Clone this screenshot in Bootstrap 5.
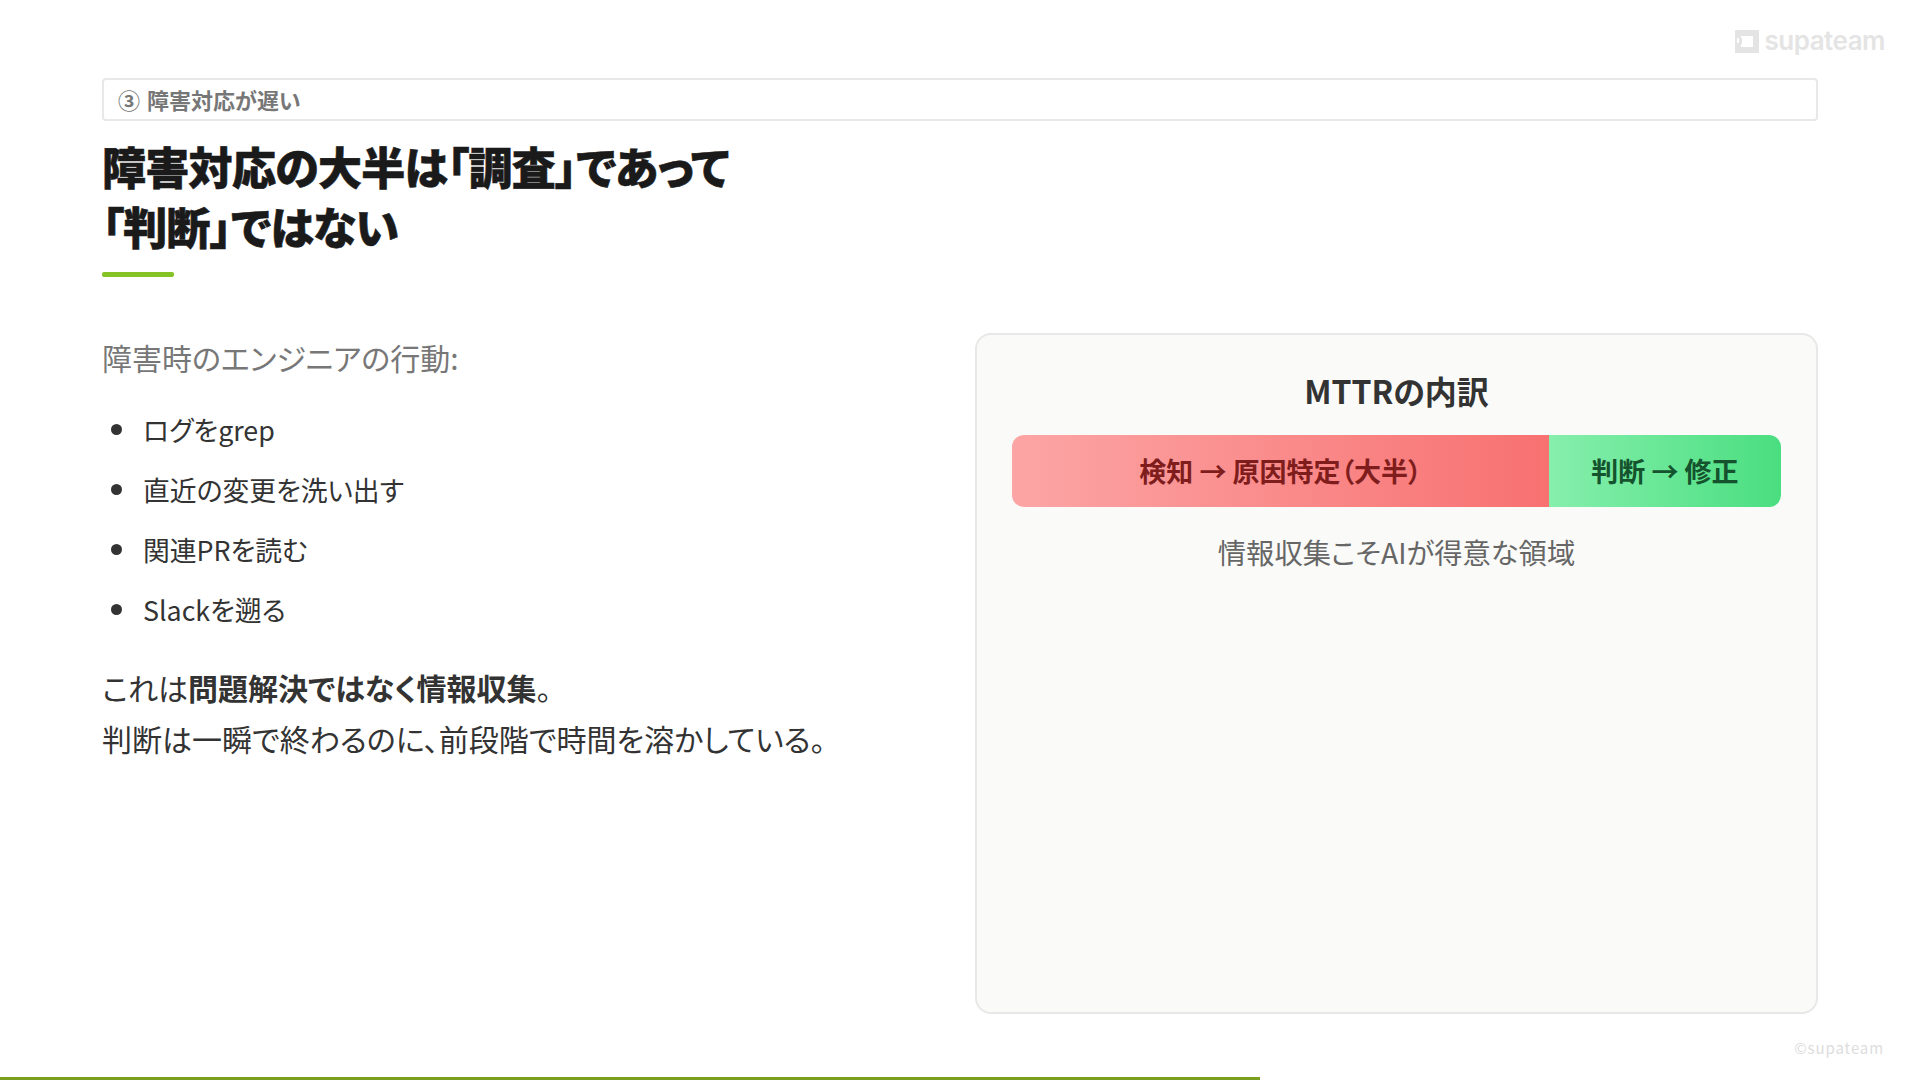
<!DOCTYPE html>
<html lang="ja">
<head>
<meta charset="utf-8">
<title>MTTR</title>
<link href="https://cdn.jsdelivr.net/npm/bootstrap@5.3.0/dist/css/bootstrap.min.css" rel="stylesheet">
<style>
html,body{height:100%;margin:0;}
body{width:1920px;height:1080px;overflow:hidden;background:#fff;position:relative;font-family:"Noto Sans CJK JP","Noto Sans",sans-serif;font-feature-settings:"palt";color:#333;}
.slide{padding:78px 102px 66px;height:1080px;}
.tagbar{height:43px;border:2px solid #e8e8e8;border-radius:4px;padding:0 14px;font-size:22px;font-weight:700;color:#777;line-height:38px;}
.tagbar span{margin-right:7px;}
.headline{font-size:44px;font-weight:900;line-height:60px;color:#1a1a1a;margin:15px 0 0;letter-spacing:-.7px;-webkit-text-stroke:.6px #1a1a1a;}
.rule{width:72px;height:5px;background:#84c225;border-radius:2px;margin-top:16px;}
.body-row{margin-top:56px;gap:0;flex:1;}
.leftcol{width:873px;}
.lead-line{font-size:30px;line-height:48px;color:#777;margin:0 0 29px;}
.items{list-style:none;margin:0;padding:0;}
.items li{font-size:26.8px;line-height:40px;margin-bottom:20px;padding-left:41px;position:relative;color:#333;}
.items li::before{content:"";position:absolute;left:9px;top:14px;width:11px;height:11px;border-radius:50%;background:#333;}
.conclude{font-size:30px;line-height:51px;color:#333;margin:32px 0 0;}
.conclude strong{font-weight:700;}
.panel{flex:1;background:#fafaf8;border:2px solid #e8e8e8;border-radius:16px;padding:32px 35px;}
.panel-title{font-size:32px;font-weight:700;line-height:46px;color:#333;text-align:center;margin:0 0 22px;}
.bar{height:72px;border-radius:12px;overflow:hidden;font-size:27px;font-weight:700;}
.seg-a{width:537px;background:linear-gradient(90deg,#fca5a5,#f87171);color:#7f1d1d;}
.seg-b{flex:1;background:linear-gradient(90deg,#86efac,#4ade80);color:#14532d;}
.panel-note{font-size:28.3px;line-height:44px;color:#666;text-align:center;margin:23px 0 0;}
.brand{position:absolute;top:24px;right:35px;gap:5px;color:#e4e4e4;font-family:"Inter","Liberation Sans",sans-serif;font-weight:600;font-size:26px;line-height:34px;letter-spacing:-.5px;}
.copy{position:absolute;right:36px;top:1037px;font-size:15px;line-height:22px;color:#ddd;letter-spacing:.9px;}
.progress-line{position:absolute;left:0;bottom:0;width:1260px;height:3px;background:#7a9e1f;}
</style>
</head>
<body>
<div class="slide d-flex flex-column">
  <div class="tagbar"><span>③</span>障害対応が遅い</div>
  <h1 class="headline">障害対応の大半は「調査」であって<br>「判断」ではない</h1>
  <div class="rule"></div>
  <div class="body-row d-flex">
    <div class="leftcol">
      <p class="lead-line">障害時のエンジニアの行動:</p>
      <ul class="items">
        <li>ログをgrep</li>
        <li>直近の変更を洗い出す</li>
        <li>関連PRを読む</li>
        <li>Slackを遡る</li>
      </ul>
      <p class="conclude">これは<strong>問題解決ではなく情報収集</strong>。<br>判断は一瞬で終わるのに、前段階で時間を溶かしている。</p>
    </div>
    <div class="panel">
      <div class="panel-title">MTTRの内訳</div>
      <div class="bar d-flex">
        <div class="seg-a d-flex align-items-center justify-content-center">検知 → 原因特定（大半）</div>
        <div class="seg-b d-flex align-items-center justify-content-center">判断 → 修正</div>
      </div>
      <p class="panel-note">情報収集こそAIが得意な領域</p>
    </div>
  </div>
</div>
<div class="brand d-flex align-items-center">
  <svg width="24" height="24" viewBox="0 0 24 24"><path fill="#e4e4e4" fill-rule="evenodd" d="M0 1h24v23H0zM6 7v11h12V7z"/><path fill="#e4e4e4" d="M4 9h3v6H4z"/><path fill="#fff" d="M2 9h2v5H2z"/></svg>
  <span>supateam</span>
</div>
<div class="copy">©supateam</div>
<div class="progress-line"></div>
<script src="https://cdn.jsdelivr.net/npm/bootstrap@5.3.0/dist/js/bootstrap.bundle.min.js"></script>
</body>
</html>
